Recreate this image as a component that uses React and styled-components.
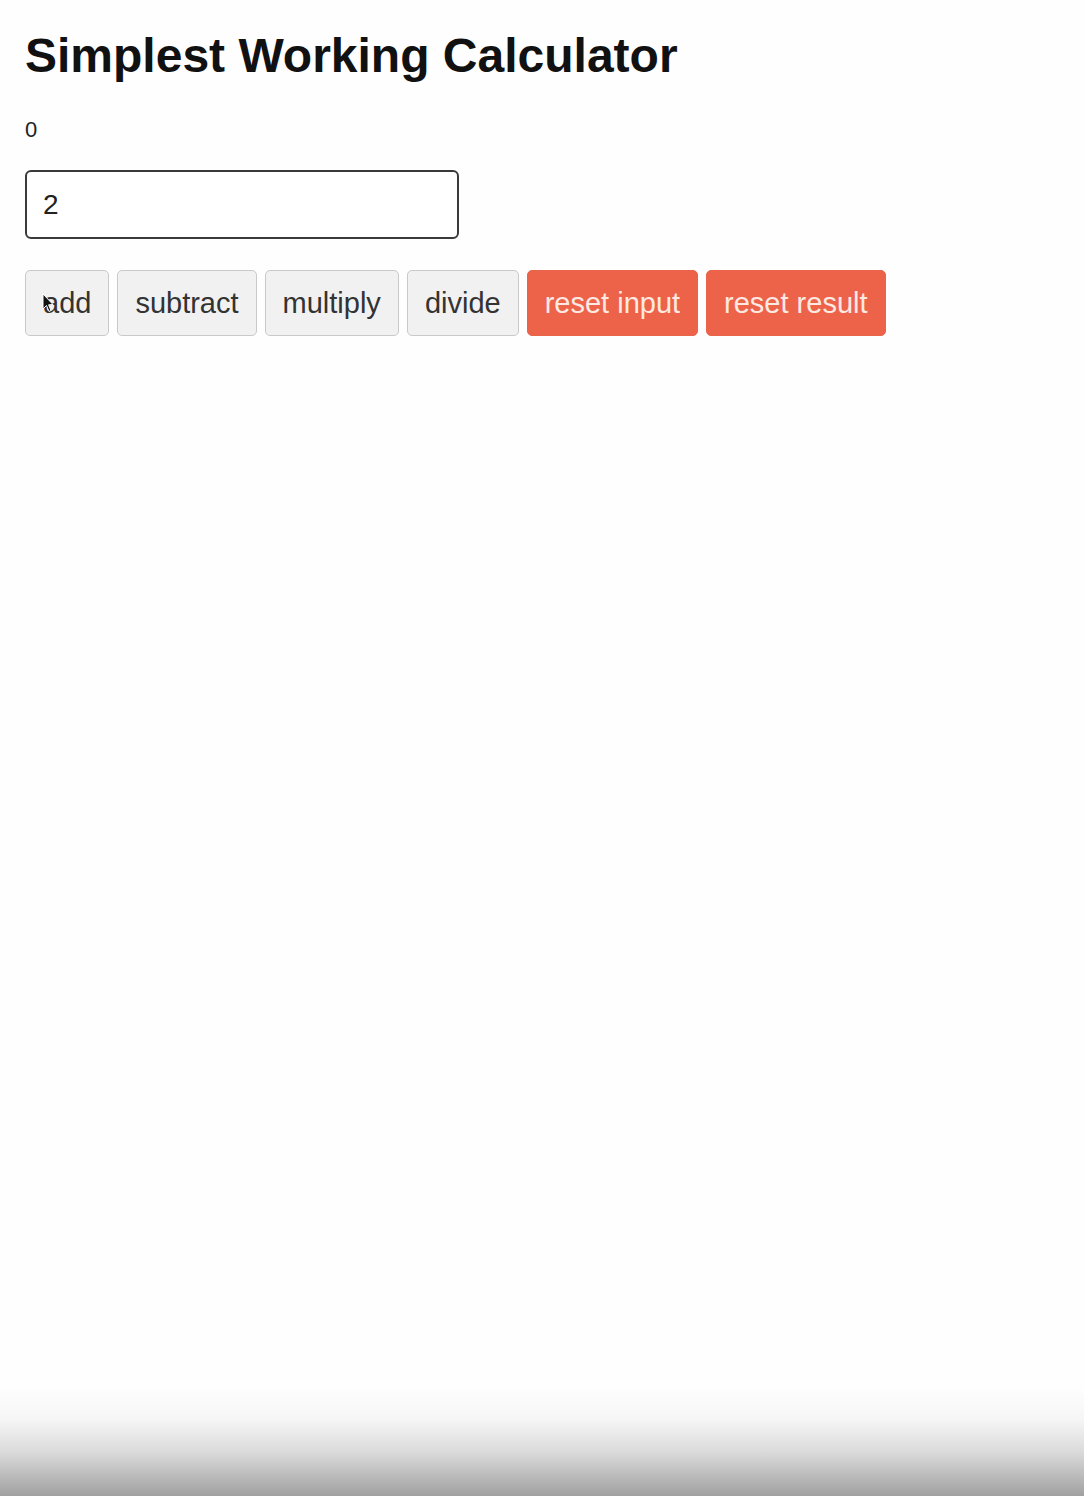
import styled, { createGlobalStyle } from 'styled-components';

const GlobalStyle = createGlobalStyle`
    html, body {
        margin: 0;
        padding: 0;
        background: #fefefe;
    }
    body {
        font-family: "Liberation Sans", Arial, sans-serif;
        color: #111;
    }
`;

const Page = styled.div`
    min-height: 100vh;
    display: flex;
    flex-direction: column;
`;

const Content = styled.main`
    padding: 27px 25px 0;
    display: flex;
    flex-direction: column;
    align-items: flex-start;
`;

const Title = styled.h1`
    margin: 0;
    font-size: 48px;
    line-height: 58px;
    font-weight: 700;
    color: #111;
`;

const Result = styled.p`
    margin: 32px 0 0;
    font-size: 22px;
    line-height: 25px;
    color: #222;
`;

const NumberInput = styled.input`
    margin-top: 28px;
    box-sizing: border-box;
    width: 434px;
    height: 69px;
    padding: 0 16px;
    border: 2px solid #3a3a3a;
    border-radius: 6px;
    background: #fff;
    font-family: inherit;
    font-size: 28px;
    color: #222;
    outline: none;
`;

const ButtonRow = styled.div`
    margin-top: 31px;
    display: flex;
    gap: 8px;
`;

const Button = styled.button`
    position: relative;
    box-sizing: border-box;
    height: 66px;
    padding: 0 17px;
    border: 1px solid ${p => (p.$danger ? '#e8654b' : '#c9c9c9')};
    border-radius: 5px;
    background: ${p => (p.$danger ? '#ec6349' : '#f1f1f1')};
    color: ${p => (p.$danger ? '#fde9e2' : '#333')};
    font-family: inherit;
    font-size: 29px;
    cursor: pointer;
`;

const Cursor = styled.svg`
    position: absolute;
    left: 16px;
    top: 22px;
    width: 12px;
    height: 20px;
`;

const Spacer = styled.div`
    flex: 1;
`;

const PlayerShade = styled.div`
    height: 110px;
    background: linear-gradient(
        to bottom,
        rgba(0, 0, 0, 0) 0%,
        rgba(0, 0, 0, 0.03) 30%,
        rgba(0, 0, 0, 0.14) 60%,
        rgba(0, 0, 0, 0.37) 100%
    );
`;

const App = () => {
    return (
        <Page>
            <GlobalStyle />
            <Content>
                <Title>Simplest Working Calculator</Title>
                <Result>0</Result>
                <NumberInput type="text" defaultValue="2" />
                <ButtonRow>
                    <Button>
                        add
                        <Cursor viewBox="0 0 12 20">
                            <path d="M1 1 L1 16 L4.5 12.5 L7 18.5 L9 17.5 L6.6 11.8 L11 11.5 Z" fill="#111" stroke="#fff" strokeWidth="1" />
                        </Cursor>
                    </Button>
                    <Button>subtract</Button>
                    <Button>multiply</Button>
                    <Button>divide</Button>
                    <Button $danger>reset input</Button>
                    <Button $danger>reset result</Button>
                </ButtonRow>
            </Content>
            <Spacer />
            <PlayerShade />
        </Page>
    );
};

export default App;
